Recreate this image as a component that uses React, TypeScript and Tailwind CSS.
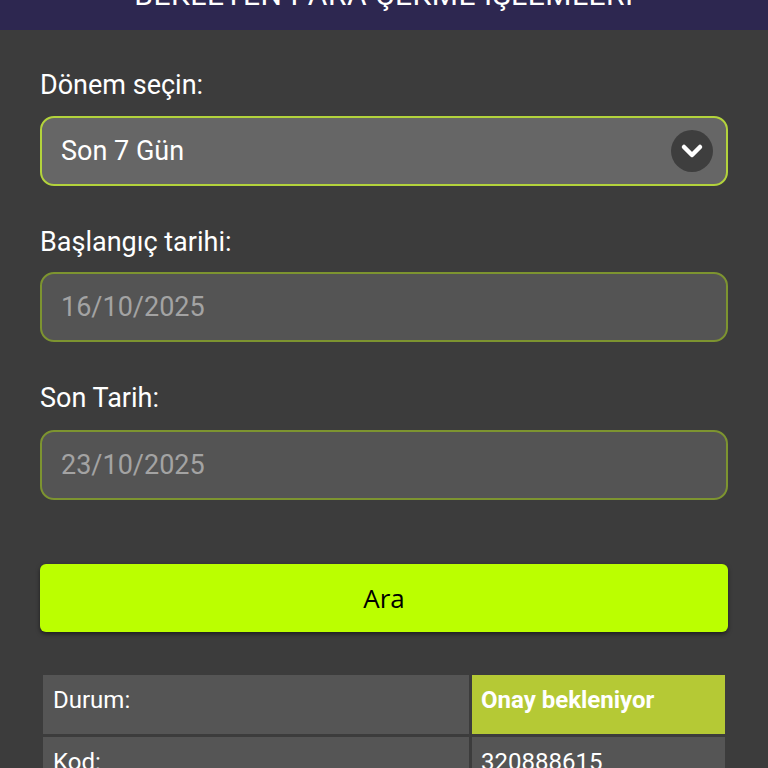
import React from "react";

export default function App() {
  return (
    <div className="min-h-[768px] w-full bg-[#3c3c3c] pb-10" style={{ fontFamily: "Roboto, 'Noto Sans', sans-serif" }}>
      <div className="h-[30px] overflow-hidden bg-[#2d2750]">
        <div className="mt-[-20px] text-center text-[30px] leading-[30px] tracking-[0.5px] text-white">
          BEKLEYEN PARA ÇEKME İŞLEMLERİ
        </div>
      </div>
      <div className="px-[40px]">
        <div className="mt-[40px] text-[27px] leading-[30px] text-white">Dönem seçin:</div>
        <div className="mt-[16px] flex h-[70px] items-center justify-between rounded-[14px] border-2 border-[#b3d33c] bg-[#666666] pl-[19px] pr-[13px]">
          <span className="text-[27px] text-white">Son 7 Gün</span>
          <span className="flex h-[42px] w-[42px] items-center justify-center rounded-full bg-[#3e3e3e]">
            <svg width="24" height="24" viewBox="0 0 24 24" fill="none" stroke="white" strokeWidth="4.5" strokeLinecap="round" strokeLinejoin="round">
              <path d="M4 8l8 8 8-8" />
            </svg>
          </span>
        </div>
        <div className="mt-[41px] text-[27px] leading-[30px] text-white">Başlangıç tarihi:</div>
        <div className="mt-[15px] flex h-[70px] items-center rounded-[14px] border-2 border-[#7d9430] bg-[#545454] pl-[19px]">
          <span className="text-[27px] text-[#a3a3a3]">16/10/2025</span>
        </div>
        <div className="mt-[41px] text-[27px] leading-[30px] text-white">Son Tarih:</div>
        <div className="mt-[17px] flex h-[70px] items-center rounded-[14px] border-2 border-[#7d9430] bg-[#545454] pl-[19px]">
          <span className="text-[27px] text-[#a3a3a3]">23/10/2025</span>
        </div>
        <button className="mt-[64px] flex h-[68px] w-full items-center justify-center rounded-[6px] bg-[#bbff00] text-[26px] text-black shadow-[0_2px_4px_rgba(0,0,0,0.5)]" style={{ fontFamily: "'Open Sans', sans-serif" }}>
          Ara
        </button>
        <table className="mt-[40px] w-[688px] border-separate border-spacing-[3px] text-[24px] text-white">
          <tbody>
            <tr>
              <td className="h-[59px] w-[426px] bg-[#555555] px-[10px] pb-[10px] align-middle">Durum:</td>
              <td className="h-[59px] bg-[#b5c935] px-[9px] pb-[10px] align-middle font-bold">Onay bekleniyor</td>
            </tr>
            <tr>
              <td className="h-[59px] bg-[#555555] px-[10px] pb-[10px] align-middle">Kod:</td>
              <td className="h-[59px] bg-[#555555] px-[9px] pb-[10px] align-middle">320888615</td>
            </tr>
          </tbody>
        </table>
      </div>
    </div>
  );
}
